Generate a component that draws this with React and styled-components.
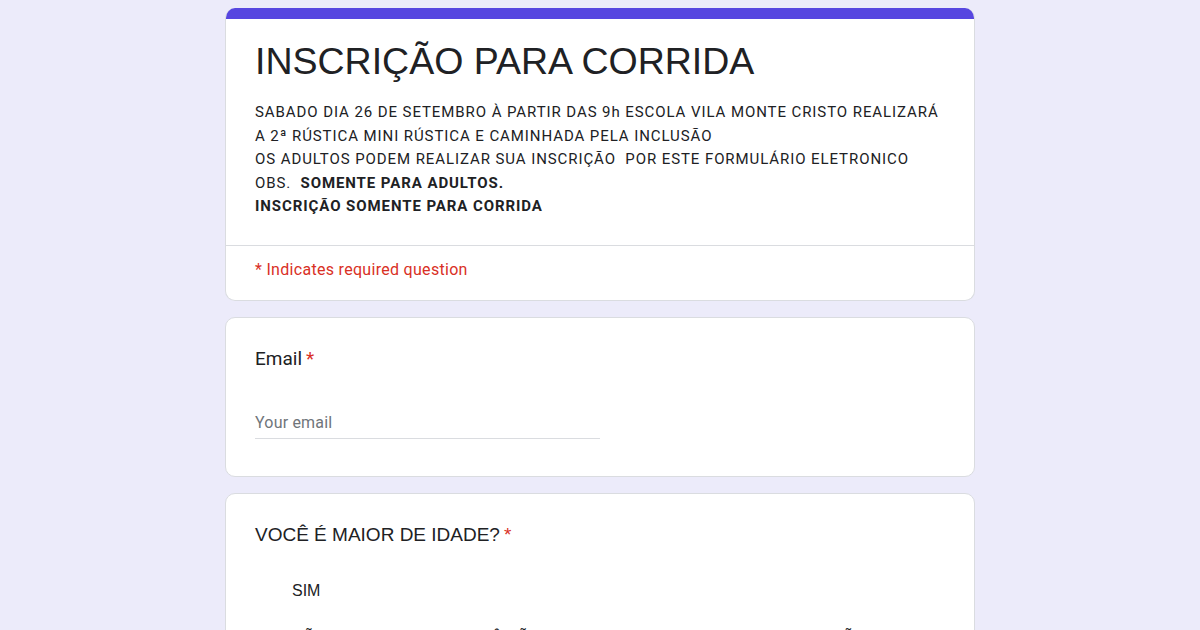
import React from "react";
import styled, { createGlobalStyle } from "styled-components";

const Global = createGlobalStyle`
  html, body { margin: 0; padding: 0; }
  body {
    background: #ecebfa;
    font-family: Roboto, "Liberation Sans", Arial, sans-serif;
    color: #202124;
    height: 630px;
    overflow: hidden;
  }
`;

const Page = styled.main`
  width: 750px;
  margin: 0 auto;
  padding-top: 8px;
  display: flex;
  flex-direction: column;
  gap: 16px;
`;

const Card = styled.section`
  background: #fff;
  border: 1px solid #dadce0;
  border-radius: 10px;
  overflow: hidden;
  box-sizing: border-box;
`;

const HeaderCard = styled(Card)`
  border-top: none;
  &::before {
    content: "";
    display: block;
    height: 11px;
    background: #5746e0;
    margin: 0 -1px;
  }
`;

const HeaderBody = styled.div`
  padding: 18px 29px 26px;
`;

const Title = styled.h1`
  margin: 0 0 16px;
  font-family: "Liberation Sans", Arial, sans-serif;
  font-weight: 400;
  font-size: 37.5px;
  line-height: 48px;
  color: #202124;
`;

const Desc = styled.div`
  font-family: Roboto, sans-serif;
  font-size: 15px;
  line-height: 23.6px;
  letter-spacing: 0.92px;
  color: #202124;
`;

const Bold = styled.b`
  font-weight: 700;
`;

const Divider = styled.hr`
  margin: 0;
  border: none;
  border-top: 1px solid #dadce0;
`;

const Required = styled.div`
  padding: 13px 29px 19px;
  font-family: Roboto, sans-serif;
  font-size: 16px;
  line-height: 22px;
  letter-spacing: 0.3px;
  color: #d93025;
`;

const QuestionCard = styled(Card)`
  padding: 27px 29px 37px;
`;

const Label = styled.div`
  font-family: ${(p) => (p.$arial ? '"Liberation Sans", Arial, sans-serif' : "Roboto, sans-serif")};
  font-size: 19px;
  line-height: 28px;
  color: #202124;
`;

const Star = styled.span`
  color: #d93025;
  margin-left: 4px;
`;

const Input = styled.div`
  margin-top: 38px;
  width: 345px;
  border-bottom: 1px solid #dadce0;
  padding-bottom: 3px;
  font-family: Roboto, sans-serif;
  font-size: 16px;
  line-height: 24px;
  letter-spacing: 0.2px;
  color: #70757a;
`;

const Options = styled.div`
  margin-top: 30px;
  padding-left: 37px;
  display: flex;
  flex-direction: column;
  gap: 23px;
`;

const Option = styled.div`
  font-family: "Liberation Sans", Arial, sans-serif;
  font-size: 16px;
  line-height: 24px;
  color: #202124;
`;

export default function App() {
  return (
    <>
      <Global />
      <Page>
        <HeaderCard>
          <HeaderBody>
            <Title>INSCRIÇÃO PARA CORRIDA</Title>
            <Desc>
              SABADO DIA 26 DE SETEMBRO À PARTIR DAS 9h ESCOLA VILA MONTE CRISTO REALIZARÁ
              <br />A 2ª RÚSTICA MINI RÚSTICA E CAMINHADA PELA INCLUSÃO
              <br />OS ADULTOS PODEM REALIZAR SUA INSCRIÇÃO&nbsp; POR ESTE FORMULÁRIO ELETRONICO
              <br />OBS.&nbsp; <Bold>SOMENTE PARA ADULTOS.</Bold>
              <br />
              <Bold>INSCRIÇÃO SOMENTE PARA CORRIDA</Bold>
            </Desc>
          </HeaderBody>
          <Divider />
          <Required>* Indicates required question</Required>
        </HeaderCard>

        <QuestionCard>
          <Label>
            Email<Star>*</Star>
          </Label>
          <Input>Your email</Input>
        </QuestionCard>

        <QuestionCard>
          <Label $arial>
            VOCÊ É MAIOR DE IDADE?<Star>*</Star>
          </Label>
          <Options>
            <Option>SIM</Option>
            <Option>NÃO (INFELIZMENTE VOCÊ NÃO PODE PARTICIPAR DESTA CORRIDA, NÃO PODE)</Option>
          </Options>
        </QuestionCard>
      </Page>
    </>
  );
}
